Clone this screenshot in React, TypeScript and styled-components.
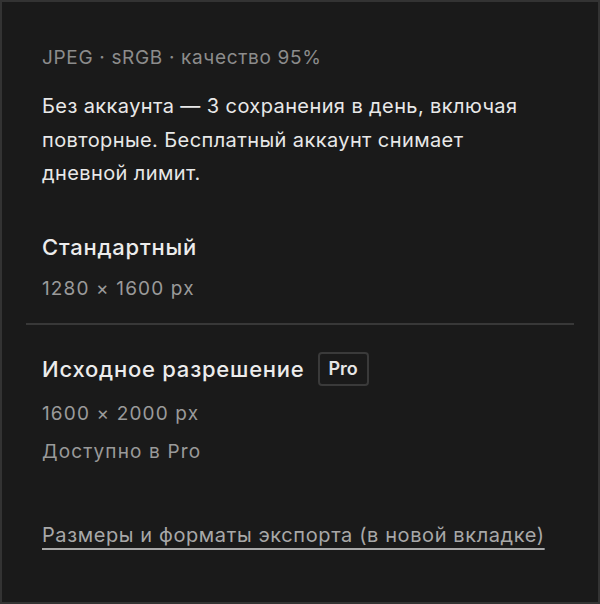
import styled, { createGlobalStyle } from "styled-components";

const GlobalStyle = createGlobalStyle`
  html, body {
    margin: 0;
    padding: 0;
    background: #1a1a1a;
  }
  body {
    font-family: Inter, "Noto Sans", sans-serif;
    -webkit-font-smoothing: antialiased;
  }
`;

function App() {
  return (
    <>
      <GlobalStyle />
      <Card>
        <Intro>
          <Meta>JPEG · sRGB · качество 95%</Meta>
          <Notice>
            Без аккаунта — 3 сохранения в день, включая повторные. Бесплатный аккаунт снимает
            дневной лимит.
          </Notice>
        </Intro>

        <Option $first>
          <TitleRow>
            <OptionTitle>Стандартный</OptionTitle>
          </TitleRow>
          <Detail>1280 × 1600 px</Detail>
        </Option>

        <Divider />

        <Option>
          <TitleRow>
            <OptionTitle>Исходное разрешение</OptionTitle>
            <Badge>Pro</Badge>
          </TitleRow>
          <Detail>1600 × 2000 px</Detail>
          <Detail>Доступно в Pro</Detail>
        </Option>

        <Footer>
          <HelpLink href="#">Размеры и форматы экспорта (в новой вкладке)</HelpLink>
        </Footer>
      </Card>
    </>
  );
}

const Card = styled.div`
  box-sizing: border-box;
  width: 600px;
  height: 604px;
  background: #1a1a1a;
  border: 2px solid #333333;
  padding: 24px;
  display: flex;
  flex-direction: column;
`;

const Intro = styled.div`
  padding: 20px 16px 0;
  display: flex;
  flex-direction: column;
  gap: 20px;
`;

const Meta = styled.div`
  font-size: 19px;
  line-height: 24px;
  color: #8c8c8c;
  letter-spacing: 0.035em;
`;

const Notice = styled.p`
  margin: 0;
  max-width: 490px;
  font-size: 20px;
  line-height: 33.5px;
  color: #e8e8e8;
  letter-spacing: 0.02em;
`;

const Option = styled.div<{ $first?: boolean }>`
  padding: ${({ $first }) => ($first ? "42px 16px 21px" : "27px 16px 0")};
  display: flex;
  flex-direction: column;
  gap: 12px;
`;

const TitleRow = styled.div`
  display: flex;
  align-items: center;
  gap: 13px;
  min-height: 28px;
  margin-bottom: 3px;
`;

const OptionTitle = styled.div`
  font-size: 22px;
  line-height: 28px;
  font-weight: 450;
  color: #ececec;
  letter-spacing: 0.035em;
`;

const Badge = styled.span`
  box-sizing: border-box;
  height: 34px;
  width: 51px;
  justify-content: center;
  display: inline-flex;
  align-items: center;
  border: 2px solid #3a3a3a;
  border-radius: 4px;
  font-size: 18px;
  font-weight: 600;
  color: #e6e6e6;
`;

const Detail = styled.div`
  font-size: 19px;
  line-height: 26px;
  color: #9a9a9a;
  letter-spacing: 0.06em;
`;

const Divider = styled.hr`
  margin: 0;
  border: 0;
  height: 2px;
  background: #383838;
`;

const Footer = styled.div`
  padding: 57px 16px 0;
`;

const HelpLink = styled.a`
  font-size: 20px;
  line-height: 26px;
  color: #a8a8a8;
  text-decoration: underline;
  text-decoration-thickness: 2px;
  text-underline-offset: 6px;
  letter-spacing: 0.03em;
`;

export default App;
